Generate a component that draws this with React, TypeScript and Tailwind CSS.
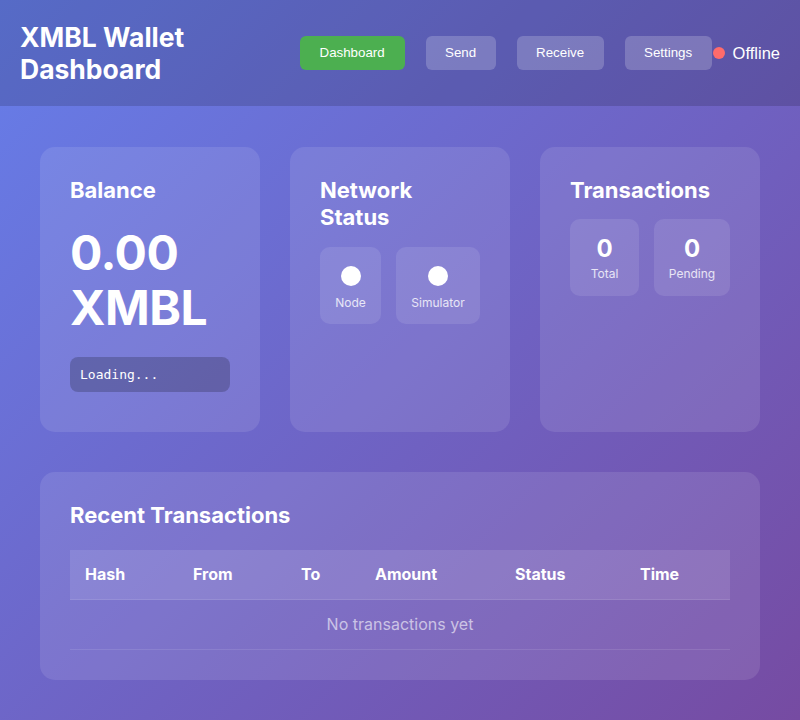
import React from "react";

const inter = { fontFamily: "Inter, 'Noto Sans', sans-serif" };

export default function App() {
  return (
    <div
      className="min-h-[720px] w-full bg-[linear-gradient(135deg,#667eea_0%,#764ba2_100%)] text-white"
      style={inter}
    >
      <header className="flex h-[106px] items-center bg-black/15 pl-5 pr-5">
        <h1 className="w-[240px] text-[26.5px] font-bold leading-[32px]">XMBL Wallet Dashboard</h1>
        <div className="ml-auto flex items-center">
          <nav className="flex gap-[21px] font-['Liberation_Sans',Arial,sans-serif] text-[13.33px]">
            <button className="h-[34px] w-[105px] rounded-[6px] bg-[#4caf50] text-white">Dashboard</button>
            <button className="h-[34px] w-[70px] rounded-[6px] bg-white/20 text-white">Send</button>
            <button className="h-[34px] w-[87px] rounded-[6px] bg-white/20 text-white">Receive</button>
            <button className="h-[34px] w-[87px] rounded-[6px] bg-white/20 text-white">Settings</button>
          </nav>
          <div className="ml-px flex items-center gap-2 font-['Liberation_Sans',Arial,sans-serif] text-[16.5px]">
            <span className="h-3 w-3 rounded-full bg-[#ff6b6b]" />
            <span>Offline</span>
          </div>
        </div>
      </header>

      <main className="px-10 pt-[41px] pb-10">
        <div className="grid grid-cols-3 gap-[30px]">
          <section className="h-[285px] rounded-[15px] bg-white/10 p-[30px]">
            <h2 className="text-[22px] font-bold leading-[27px]">Balance</h2>
            <div className="mt-[21px] text-[48px] font-bold leading-[55px] tracking-[-0.5px]">0.00 XMBL</div>
            <div className="mt-[22px] flex h-[35px] w-[160px] items-center rounded-[8px] bg-black/20 px-[10px] font-['DejaVu_Sans_Mono',monospace] text-[13px]">
              Loading...
            </div>
          </section>

          <section className="h-[285px] rounded-[15px] bg-white/10 p-[30px]">
            <h2 className="text-[22px] font-bold leading-[27px]">Network Status</h2>
            <div className="mt-4 flex gap-[15px]">
              <div className="flex h-[77px] w-[61px] flex-col items-center rounded-[10px] bg-white/10 pt-[19px]">
                <span className="h-5 w-5 rounded-full bg-white" />
                <span className="mt-[9px] text-[12px] leading-[15px] text-white/80">Node</span>
              </div>
              <div className="flex h-[77px] w-[84px] flex-col items-center rounded-[10px] bg-white/10 pt-[19px]">
                <span className="h-5 w-5 rounded-full bg-white" />
                <span className="mt-[9px] text-[12px] leading-[15px] text-white/80">Simulator</span>
              </div>
            </div>
          </section>

          <section className="h-[285px] rounded-[15px] bg-white/10 p-[30px]">
            <h2 className="text-[22px] font-bold leading-[27px]">Transactions</h2>
            <div className="mt-[15px] flex gap-[15px]">
              <div className="flex h-[77px] w-[69px] flex-col items-center rounded-[10px] bg-white/10 pt-[15px]">
                <span className="text-[24px] font-bold leading-[29px]">0</span>
                <span className="mt-[3px] text-[12px] leading-[15px] text-white/80">Total</span>
              </div>
              <div className="flex h-[77px] w-[76px] flex-col items-center rounded-[10px] bg-white/10 pt-[15px]">
                <span className="text-[24px] font-bold leading-[29px]">0</span>
                <span className="mt-[3px] text-[12px] leading-[15px] text-white/80">Pending</span>
              </div>
            </div>
          </section>
        </div>

        <section className="mt-10 rounded-[15px] bg-white/10 p-[30px]">
          <h2 className="text-[22px] font-bold leading-[27px]">Recent Transactions</h2>
          <table className="mt-[21px] w-full border-collapse text-[16px]">
            <thead>
              <tr className="border-b border-white/10 bg-white/10 text-left">
                <th className="w-[108px] p-[15px] font-bold leading-[19px]">Hash</th>
                <th className="w-[108px] p-[15px] font-bold leading-[19px]">From</th>
                <th className="w-[74px] p-[15px] font-bold leading-[19px]">To</th>
                <th className="w-[140px] p-[15px] font-bold leading-[19px]">Amount</th>
                <th className="w-[125px] p-[15px] font-bold leading-[19px]">Status</th>
                <th className="p-[15px] font-bold leading-[19px]">Time</th>
              </tr>
            </thead>
            <tbody>
              <tr className="border-b border-white/10">
                <td colSpan={6} className="p-[15px] text-center leading-[19px] text-white/60">
                  No transactions yet
                </td>
              </tr>
            </tbody>
          </table>
        </section>
      </main>
    </div>
  );
}
